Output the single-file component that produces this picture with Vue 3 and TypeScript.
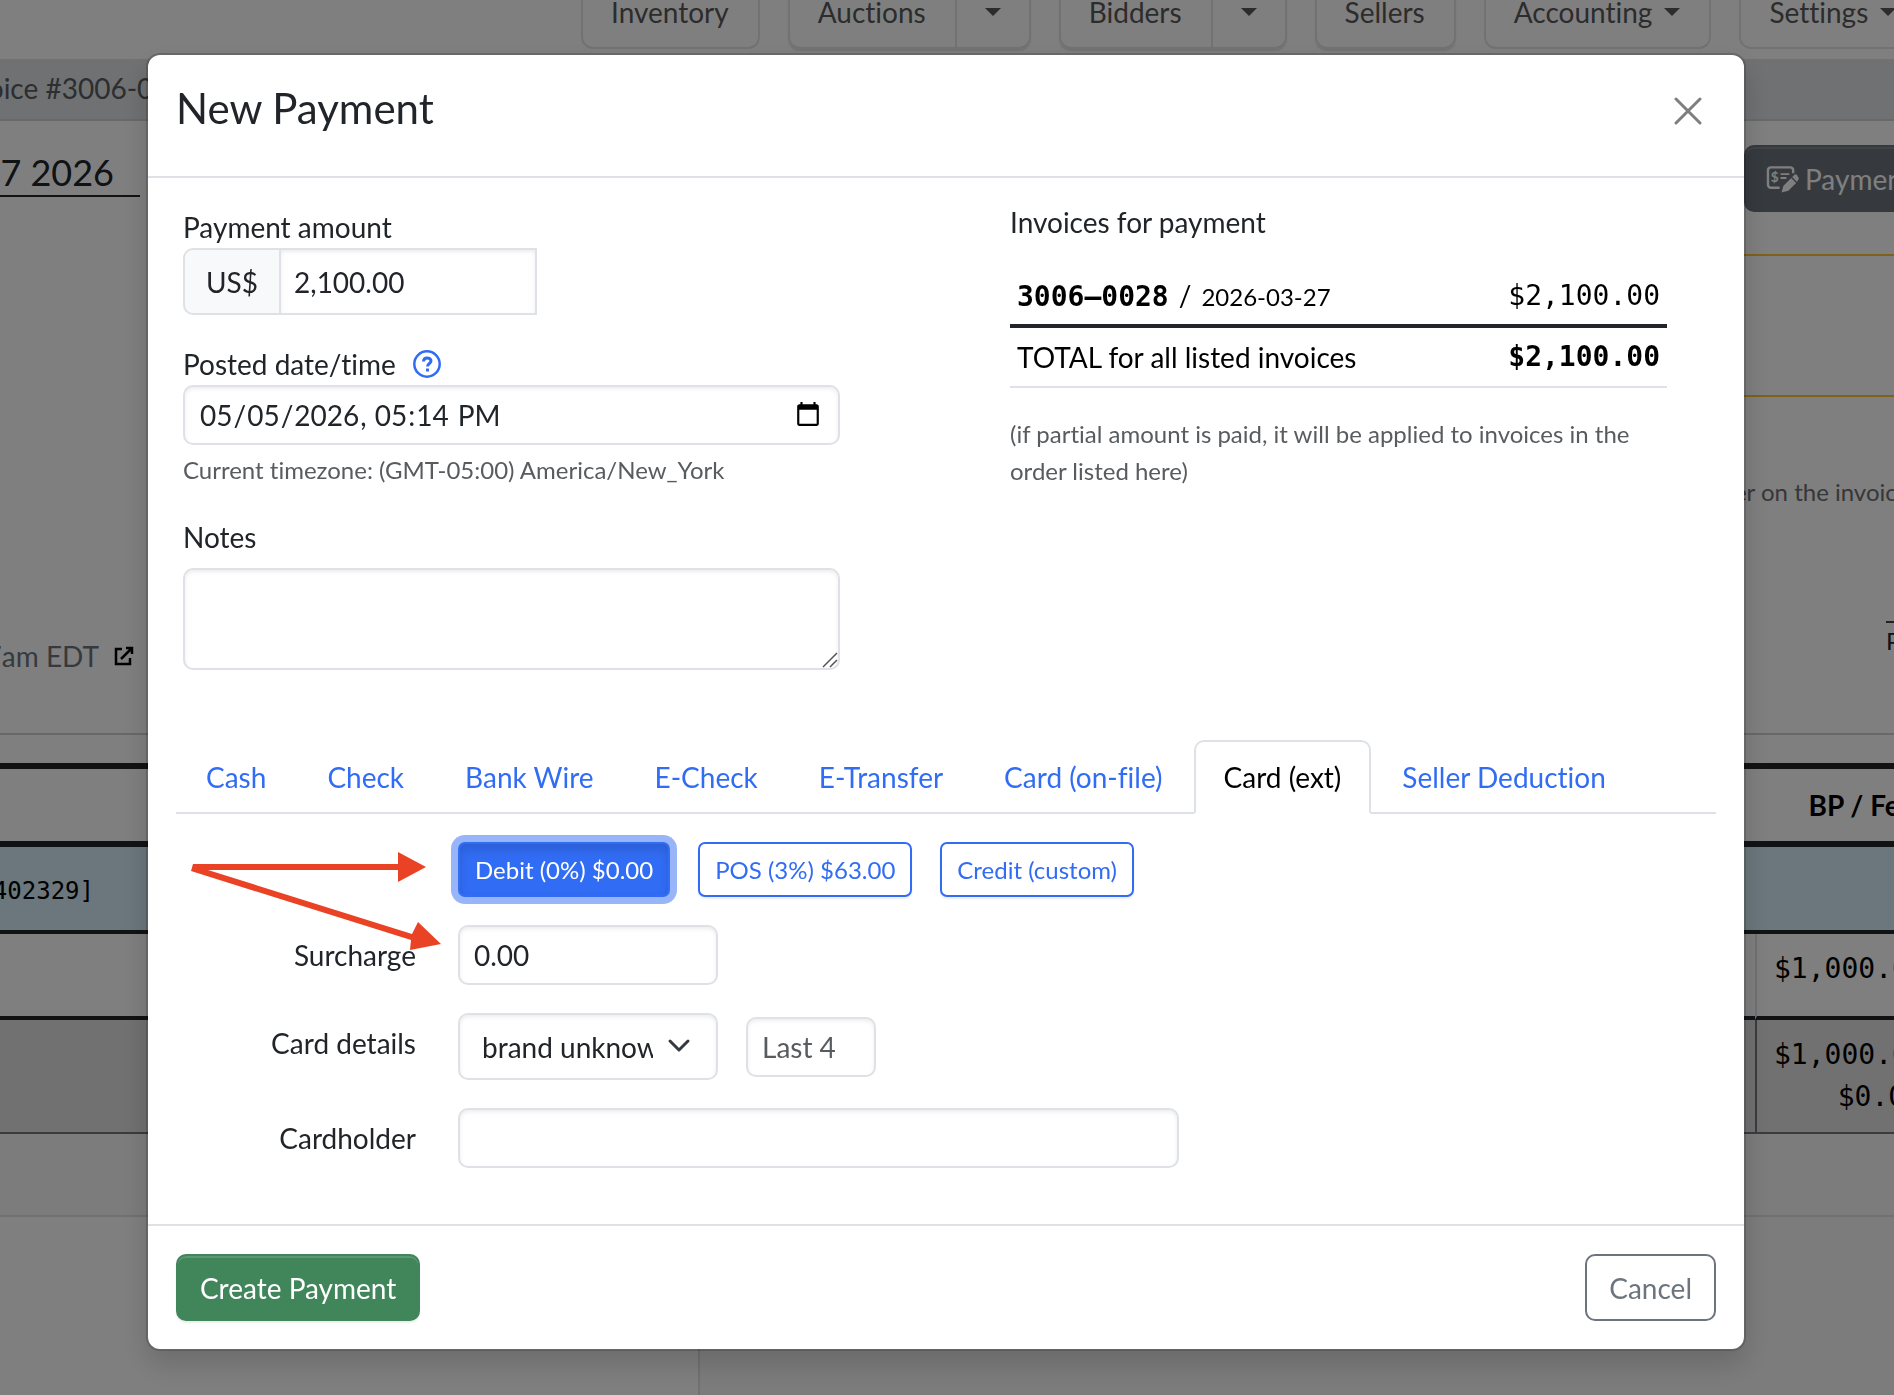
<script setup lang="ts">
import { ref } from 'vue'

interface NavItem {
  label: string
  split?: boolean
  caret?: boolean
  raised?: boolean
}

const navItems: NavItem[] = [
  { label: 'Inventory' },
  { label: 'Auctions', split: true, raised: true },
  { label: 'Bidders', split: true, raised: true },
  { label: 'Sellers', raised: true },
  { label: 'Accounting', caret: true },
  { label: 'Settings', caret: true },
]

const tabs: string[] = [
  'Cash',
  'Check',
  'Bank Wire',
  'E-Check',
  'E-Transfer',
  'Card (on-file)',
  'Card (ext)',
  'Seller Deduction',
]
const activeTab = ref('Card (ext)')

const surcharges: string[] = ['Debit (0%) $0.00', 'POS (3%) $63.00', 'Credit (custom)']
const activeSurcharge = ref(surcharges[0])

const amount = ref('2,100.00')
const posted = ref('2026-05-05T17:14')
const notes = ref('')
const surcharge = ref('0.00')
const brand = ref('unknown')
const lastFour = ref('')
const cardholder = ref('')
</script>

<template>
  <div class="app">
    <div class="page" aria-hidden="true">
      <nav class="nav">
        <div v-for="item in navItems" :key="item.label" class="nav-group" :class="{ raised: item.raised }">
          <button type="button" class="nav-btn">
            {{ item.label }}<span v-if="item.caret" class="caret inline"></span>
          </button>
          <button v-if="item.split" type="button" class="nav-btn split"><span class="caret"></span></button>
        </div>
      </nav>

      <div class="crumb"><span class="crumb-text">Invoice #3006-0028</span></div>

      <div class="info">
        <div class="info-left">
          <div class="date">March 27 2026</div>
          <div class="stamp">
            <span>10:07am EDT</span>
            <svg width="20" height="20" viewBox="0 0 20 20" fill="none" stroke="#000" stroke-width="2.5">
              <path d="M8 3H2v15h14v-6" />
              <path d="M12 2h6v6M18 2L7 13" />
            </svg>
          </div>
        </div>
        <div class="info-right">
          <button type="button" class="pay-btn">
            <svg width="33" height="28" viewBox="0 0 34 28" fill="none" stroke="#fff" stroke-width="2.5">
              <path d="M14 23H5a3 3 0 0 1-3-3V5a3 3 0 0 1 3-3h20a3 3 0 0 1 3 3v3" />
              <path d="M15 9h9M15 13h6" stroke-width="2" />
              <text x="5" y="17" font-size="14" font-weight="700" fill="#fff" stroke="none">$</text>
              <path d="M16 28l2-7 8-8 5 5-8 8z" fill="#fff" stroke="none" />
              <path d="M27 12l2-2a2 2 0 0 1 3 0l1 2a2 2 0 0 1 0 3l-1 2z" fill="#fff" stroke="none" />
            </svg>
            Payments
          </button>
          <div class="alert"></div>
          <p class="hint">number on the invoice</p>
          <p class="sign">Paid by</p>
        </div>
      </div>

      <div class="lots">
        <table>
          <thead>
            <tr><th></th><th>BP / Fees</th></tr>
          </thead>
          <tbody>
            <tr class="group">
              <td colspan="2"><div class="lot-id">[402329]</div></td>
            </tr>
            <tr class="line"><td></td><td>$1,000.00</td></tr>
            <tr class="sum"><td></td><td>$1,000.00<br />$0.00</td></tr>
          </tbody>
        </table>
      </div>
      <div class="after-lots"></div>
      <div class="page-bottom"></div>
    </div>

    <div class="backdrop">
      <section class="modal" role="dialog" aria-labelledby="modal-title">
        <header class="modal-header">
          <h1 id="modal-title">New Payment</h1>
          <button type="button" class="close" aria-label="Close">
            <svg width="28" height="28" viewBox="0 0 28 28" fill="none" stroke="#000" stroke-width="3" stroke-linecap="round">
              <path d="M2 2l24 24M26 2L2 26" />
            </svg>
          </button>
        </header>

        <div class="modal-body">
          <div class="details">
            <div class="fields">
              <label for="amount">Payment amount</label>
              <div class="input-group">
                <span class="addon">US$</span>
                <input id="amount" v-model="amount" type="text" class="control" />
              </div>

              <div class="label-row">
                <label for="posted">Posted date/time</label>
                <svg width="28" height="28" viewBox="0 0 28 28" fill="none" stroke="#316cf4" stroke-width="3">
                  <circle cx="14" cy="14" r="12.7" stroke-width="2.5" />
                  <path d="M10.5 11.5c0-5 7.500-4.500 7.500-.5 0 2.500-3.500 2.500-3.500 5.500" />
                  <path d="M14.500 18.500v3" />
                </svg>
              </div>
              <input id="posted" v-model="posted" type="datetime-local" class="control wide" />
              <p class="help">Current timezone: (GMT-05:00) America/New_York</p>

              <label for="notes" class="notes-label">Notes</label>
              <div class="notes-wrap">
                <textarea id="notes" v-model="notes" class="control wide"></textarea>
                <svg class="grip" width="16" height="16" viewBox="0 0 16 16" stroke="#555" stroke-width="1.5">
                  <path d="M1 15L15 1M8 15l7-7" />
                </svg>
              </div>
            </div>

            <div class="invoices">
              <div>Invoices for payment</div>
              <table class="inv-table">
                <tbody>
                  <tr>
                    <td><b class="mono">3006–0028</b><span class="slash">/</span><small>2026-03-27</small></td>
                    <td class="mono num">$2,100.00</td>
                  </tr>
                  <tr>
                    <td>TOTAL for all listed invoices</td>
                    <td class="mono num"><b>$2,100.00</b></td>
                  </tr>
                </tbody>
              </table>
              <p class="note">(if partial amount is paid, it will be applied to invoices in the order listed here)</p>
            </div>
          </div>

          <div class="tabs" role="tablist">
            <button
              v-for="tab in tabs"
              :key="tab"
              type="button"
              role="tab"
              class="tab"
              :class="{ active: tab === activeTab }"
              :aria-selected="tab === activeTab"
              @click="activeTab = tab"
            >
              {{ tab }}
            </button>
          </div>

          <div class="pane">
            <div class="form-row">
              <span></span>
              <div class="options">
                <button
                  v-for="option in surcharges"
                  :key="option"
                  type="button"
                  class="option"
                  :class="{ active: option === activeSurcharge }"
                  @click="activeSurcharge = option"
                >
                  {{ option }}
                </button>
              </div>
            </div>
            <div class="form-row">
              <label for="surcharge">Surcharge</label>
              <input id="surcharge" v-model="surcharge" type="text" class="control short" />
            </div>
            <div class="form-row">
              <label for="brand">Card details</label>
              <div class="card-fields">
                <div class="select-wrap">
                  <select id="brand" v-model="brand" class="control short">
                    <option value="unknown">brand unknown</option>
                    <option value="visa">Visa</option>
                    <option value="mastercard">Mastercard</option>
                  </select>
                  <svg class="chevron" width="24" height="16" viewBox="0 0 24 16" fill="none" stroke="#343a40" stroke-width="3" stroke-linecap="round" stroke-linejoin="round">
                    <path d="M3 3l9 9 9-9" />
                  </svg>
                </div>
                <input v-model="lastFour" type="text" class="control last-four" placeholder="Last 4" aria-label="Last 4" />
              </div>
            </div>
            <div class="form-row">
              <label for="cardholder">Cardholder</label>
              <input id="cardholder" v-model="cardholder" type="text" class="control holder" />
            </div>

            <svg class="arrows" width="280" height="150" viewBox="0 0 280 150" fill="#ea4224">
              <path d="M17 50H222V38L250 53L222 68V56H32L236 120L242 108L265 130L234 136L235 126L15 57Z" />
            </svg>
          </div>
        </div>

        <footer class="modal-footer">
          <button type="button" class="btn create">Create Payment</button>
          <button type="button" class="btn cancel">Cancel</button>
        </footer>
      </section>
    </div>
  </div>
</template>

<style>
html,
body {
  overflow: hidden;
}
</style>

<style scoped>
* {
  box-sizing: border-box;
}

.app {
  font-family: Lato, 'Liberation Sans', sans-serif;
  font-size: 28px;
  font-variant-ligatures: none;
  line-height: 42px;
  color: #212529;
}

button,
input,
select,
textarea {
  font: inherit;
  font-variant-ligatures: none;
  color: inherit;
  margin: 0;
}

p,
h1 {
  margin: 0;
}

.mono,
.lots td {
  font-family: 'DejaVu Sans Mono', monospace;
}

/* Page underneath the dialog */
.page {
  height: 100vh;
  overflow: hidden;
  display: flex;
  flex-direction: column;
  background: #fff;
}

.nav {
  display: flex;
  flex: none;
  gap: 28px;
  height: 59px;
  padding-left: 581px;
}

.nav-group {
  display: flex;
  flex: none;
  height: 49px;
  border: 2px solid #e4e4e4;
  border-top: 0;
  border-radius: 0 0 12px 12px;
}

.nav-group.raised {
  box-shadow: 0 2px 2px #dfe4e2;
}

.nav-btn {
  display: flex;
  align-items: center;
  padding: 0 29px 23px 28px;
  border: 0;
  background: none;
  color: #595959;
  white-space: nowrap;
}

.nav-btn.split {
  border-left: 2px solid #e4e4e4;
  padding: 0 28px 23px;
}

.caret {
  border: 8px solid transparent;
  border-top-color: #595959;
  border-bottom: 0;
}

.caret.inline {
  margin-left: 12px;
}

.crumb {
  flex: none;
  height: 62px;
  background: #e0e2e6;
  border-bottom: 2px solid #ced4da;
  color: #595c5f;
}

.crumb-text {
  display: flex;
  justify-content: flex-end;
  width: 202px;
  padding-top: 8px;
  white-space: nowrap;
}

.info {
  display: flex;
  flex: none;
  justify-content: space-between;
  height: 614px;
  border-bottom: 2px solid #d0d0d0;
}

.info-left {
  width: 140px;
  padding-top: 28px;
}

.date {
  display: flex;
  justify-content: flex-end;
  padding-right: 26px;
  border-bottom: 2px solid #212529;
  font-size: 36px;
  line-height: 46px;
  white-space: nowrap;
}

.stamp {
  display: flex;
  align-items: center;
  justify-content: flex-end;
  gap: 15px;
  margin-top: 438px;
  padding-right: 6px;
  color: #6c757d;
  white-space: nowrap;
}

.stamp svg {
  flex: none;
}

.info-right {
  display: flex;
  flex-direction: column;
  width: 250px;
  padding-top: 24px;
}

.pay-btn {
  display: flex;
  flex: none;
  align-items: center;
  gap: 6px;
  width: 180px;
  height: 67px;
  margin-left: 100px;
  padding: 0 20px;
  border: 2px solid #6c757d;
  border-radius: 10px;
  background: #6c757d;
  box-shadow: inset 0 2px 0 rgba(255, 255, 255, 0.15);
  color: #fff;
}

.pay-btn svg {
  flex: none;
}

.alert {
  height: 143px;
  margin-top: 42px;
  border: solid #ffc42e;
  border-width: 2px 0;
}

.hint {
  margin-top: 76px;
  padding-left: 30px;
  font-size: 24px;
  line-height: 37px;
  color: #6c6f72;
  white-space: nowrap;
}

.sign {
  margin: 111px 0 0 242px;
  border-top: 2px solid #444;
  font-size: 24px;
  line-height: 36px;
  white-space: nowrap;
}

.lots {
  flex: none;
  margin-top: 28px;
}

.lots table {
  width: calc(100% + 45px);
  table-layout: fixed;
  border-spacing: 0;
  text-align: right;
  color: #000;
}

.lots th,
.lots td {
  padding: 14px 17px;
  vertical-align: top;
}

.lots th {
  height: 82px;
  padding: 15px 12px;
  border: solid #212529;
  border-width: 6px 0;
}

.lots th:last-child {
  width: 184px;
}

.lots .group td {
  height: 87px;
  padding: 23px 0 17px;
  border-bottom: 4px solid #212529;
  background: #d6eff8;
}

.lot-id {
  display: flex;
  justify-content: flex-end;
  width: 94px;
  font-size: 24px;
}

.lots .line td {
  height: 86px;
  border-bottom: 4px solid #212529;
}

.lots .line td:last-child {
  border-left: 2px solid #dee2e6;
}

.lots .sum td {
  height: 114px;
  border-bottom: 2px solid #73777e;
  background: #e2e2e2;
}

.lots .sum td:last-child {
  border-left: 2px solid #73777e;
}

.after-lots {
  flex: none;
  height: 83px;
  background: #f8f8f8;
  border-bottom: 2px solid #e2e2e2;
}

.page-bottom {
  flex: 1;
  background: linear-gradient(90deg, #fff 698px, #e2e2e2 698px 700px, #f8f8f8 700px);
}

/* Dialog */
.backdrop {
  position: fixed;
  inset: 0;
  padding: 53px 148px 0 146px;
  background: rgba(0, 0, 0, 0.5);
}

.modal {
  max-width: 1600px;
  margin: 0 auto;
  border: 2px solid rgba(0, 0, 0, 0.175);
  border-radius: 14px;
  background: #fff;
  background-clip: padding-box;
  box-shadow: 0 14px 28px rgba(0, 0, 0, 0.15);
}

.modal-header {
  display: flex;
  justify-content: space-between;
  align-items: flex-start;
  padding: 28px 28px 37px;
  border-bottom: 2px solid #dee2e6;
}

h1 {
  font-size: 42px;
  line-height: 51px;
  font-weight: 400;
}

.close {
  display: flex;
  padding: 14px;
  border: 0;
  background: none;
  opacity: 0.5;
}

.modal-body {
  padding: 28px 28px 56px;
}

.details {
  display: grid;
  grid-template-columns: 1fr 1fr;
  gap: 170px;
  padding: 0 49px 0 7px;
}

.fields label {
  display: block;
}

.control {
  display: block;
  height: 60px;
  padding: 0 14px;
  border: 2px solid #dee2e6;
  border-radius: 10px;
  background-color: #fff;
  box-shadow: inset 0 2px 4px rgba(0, 0, 0, 0.075);
  outline: 0;
}

.control::placeholder {
  color: #595c5f;
  opacity: 1;
}

.control.wide {
  width: 100%;
}

.control.short {
  width: 260px;
}

.input-group {
  display: flex;
  width: 354px;
  height: 67px;
  margin-bottom: 28px;
}

.addon {
  display: flex;
  align-items: center;
  padding: 0 21px;
  border: 2px solid #dee2e6;
  border-right: 0;
  border-radius: 10px 0 0 10px;
  background: #f8f9fa;
}

.input-group .control {
  flex: 1;
  min-width: 0;
  height: 67px;
  padding: 0 13px;
  border-radius: 0;
}

.label-row {
  display: flex;
  align-items: center;
  gap: 17px;
}

.help {
  margin: 6px 0 28px;
  font-size: 24px;
  line-height: 37px;
  color: #595c5f;
}

.notes-label {
  margin-bottom: 10px;
}

.notes-wrap {
  position: relative;
}

textarea.control {
  height: 102px;
  padding: 7px 14px;
  resize: none;
}

.grip {
  position: absolute;
  right: 2px;
  bottom: 2px;
}

.invoices {
  margin-top: -5px;
}

.inv-table {
  width: 100%;
  margin: 23px 0 27px;
  border-collapse: separate;
  border-spacing: 0;
  color: #000;
}

.inv-table td {
  padding: 8px 7px;
  border-bottom: 2px solid #dee2e6;
}

.inv-table tr:first-child td {
  padding-bottom: 6px;
  border-bottom: 4px solid #212529;
}

.inv-table .num {
  text-align: right;
}

.slash {
  margin: 0 10px;
}

.inv-table small,
.note {
  font-size: 24px;
}

.note {
  line-height: 37px;
  color: #595c5f;
}

.tabs {
  display: flex;
  gap: 1px;
  margin-top: 70px;
  border-bottom: 2px solid #dee2e6;
}

.tab {
  margin-bottom: -2px;
  padding: 14px 28px;
  border: 2px solid transparent;
  border-radius: 10px 10px 0 0;
  background: none;
  color: #316cf4;
  white-space: nowrap;
}

.tab.active {
  border-color: #dee2e6 #dee2e6 #fff;
  background: #fff;
  color: #000;
}

.pane {
  position: relative;
  display: flex;
  flex-direction: column;
  gap: 28px;
  padding-top: 28px;
}

.form-row {
  display: grid;
  grid-template-columns: 240px 1fr;
  column-gap: 42px;
}

.form-row label {
  padding-top: 9px;
  text-align: right;
}

.options,
.card-fields {
  display: flex;
  align-items: center;
  gap: 28px;
}

.option {
  height: 55px;
  padding: 0 15px;
  border: 2px solid #316cf4;
  border-radius: 7px;
  background: #fff;
  box-shadow: 0 2px 2px rgba(0, 0, 0, 0.075);
  font-size: 24px;
  line-height: 37px;
  color: #316cf4;
}

.option.active {
  background: #316cf4;
  color: #fff;
  box-shadow: inset 0 6px 10px rgba(0, 0, 0, 0.125), 0 0 0 7px rgba(49, 108, 244, 0.5);
}

.select-wrap {
  position: relative;
}

select.control {
  height: 67px;
  padding: 0 63px 0 22px;
  appearance: none;
}

.chevron {
  position: absolute;
  right: 27px;
  top: 25px;
  pointer-events: none;
}

.last-four {
  width: 130px;
}

.holder {
  width: 721px;
}

.arrows {
  position: absolute;
  left: 0;
  top: 0;
  pointer-events: none;
}

.modal-footer {
  display: flex;
  justify-content: space-between;
  padding: 28px;
  border-top: 2px solid #dee2e6;
}

.btn {
  height: 67px;
  padding: 0 22px;
  border: 2px solid;
  border-radius: 10px;
}

.create {
  border-color: #40865a;
  background: #40865a;
  color: #fff;
  box-shadow: inset 0 2px 0 rgba(255, 255, 255, 0.15), 0 2px 2px rgba(0, 0, 0, 0.075);
}

.cancel {
  border-color: #6c757d;
  background: #fff;
  color: #6c757d;
}
</style>
